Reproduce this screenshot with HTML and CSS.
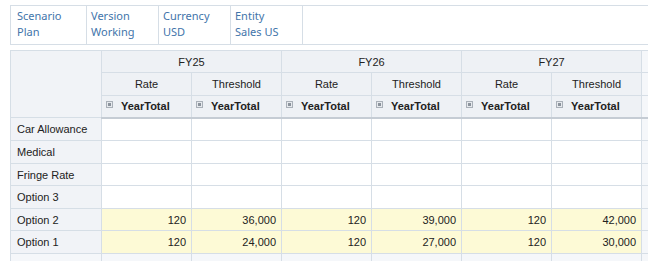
FILE: index.html
```html
<!DOCTYPE html>
<html lang="en">
<head>
  <meta charset="UTF-8" />
  <title>Form Grid</title>
  <link rel="stylesheet" href="styles.css">
</head>
<body>
  <div class="pov">
    <div class="pov-item first">
      <div>Scenario</div>
      <div>Plan</div>
    </div>
    <div class="pov-item">
      <div>Version</div>
      <div>Working</div>
    </div>
    <div class="pov-item">
      <div>Currency</div>
      <div>USD</div>
    </div>
    <div class="pov-item">
      <div>Entity</div>
      <div>Sales US</div>
    </div>
  </div>

  <div class="grid-wrap">
    <table class="grid">
      <colgroup>
        <col class="c-head">
        <col class="c-data"><col class="c-data">
        <col class="c-data"><col class="c-data">
        <col class="c-data"><col class="c-data">
        <col class="c-data">
      </colgroup>
      <thead>
        <tr>
          <th class="corner" rowspan="3"></th>
          <th colspan="2">FY25</th>
          <th colspan="2">FY26</th>
          <th colspan="2">FY27</th>
          <th class="more"></th>
        </tr>
        <tr>
          <th>Rate</th><th>Threshold</th>
          <th>Rate</th><th>Threshold</th>
          <th>Rate</th><th>Threshold</th>
          <th class="more"></th>
        </tr>
        <tr class="period">
          <th><span class="expand"></span>YearTotal</th>
          <th><span class="expand"></span>YearTotal</th>
          <th><span class="expand"></span>YearTotal</th>
          <th><span class="expand"></span>YearTotal</th>
          <th><span class="expand"></span>YearTotal</th>
          <th><span class="expand"></span>YearTotal</th>
          <th class="more"></th>
        </tr>
      </thead>
      <tbody>
        <tr>
          <th class="row-label">Car Allowance</th>
          <td></td><td></td><td></td><td></td><td></td><td></td><td class="more"></td>
        </tr>
        <tr>
          <th class="row-label">Medical</th>
          <td></td><td></td><td></td><td></td><td></td><td></td><td class="more"></td>
        </tr>
        <tr>
          <th class="row-label">Fringe Rate</th>
          <td></td><td></td><td></td><td></td><td></td><td></td><td class="more"></td>
        </tr>
        <tr>
          <th class="row-label">Option 3</th>
          <td></td><td></td><td></td><td></td><td></td><td></td><td class="more"></td>
        </tr>
        <tr class="filled">
          <th class="row-label">Option 2</th>
          <td>120</td><td>36,000</td><td>120</td><td>39,000</td><td>120</td><td>42,000</td><td class="more"></td>
        </tr>
        <tr class="filled">
          <th class="row-label">Option 1</th>
          <td>120</td><td>24,000</td><td>120</td><td>27,000</td><td>120</td><td>30,000</td><td class="more"></td>
        </tr>
        <tr class="blank">
          <th class="row-label"></th>
          <td></td><td></td><td></td><td></td><td></td><td></td><td class="more"></td>
        </tr>
      </tbody>
    </table>
  </div>
</body>
</html>
```

FILE: styles.css
```css
body {
  margin: 0;
  background: #fff;
  font-family: "Liberation Sans", Arial, sans-serif;
  color: #222;
}

/* POV bar */
.pov {
  display: flex;
  margin: 5px 0 0 10px;
  border: 1px solid #d6dee6;
  border-right: none;
  height: 38px;
}

.pov-item {
  width: 72px;
  box-sizing: border-box;
  padding: 2px 0 0 4px;
  border-right: 1px solid #d6dee6;
  font-family: "Noto Sans", "Open Sans", sans-serif;
  font-size: 11px;
  line-height: 16px;
  color: #4274aa;
}

.pov-item.first {
  width: 76px;
  padding-left: 6px;
}

/* grid */
.grid-wrap {
  margin: 5px 0 0 10px;
  height: 211px;
  overflow: hidden;
}

.grid {
  border-collapse: collapse;
  table-layout: fixed;
  width: 721px;
  font-size: 11px;
}

.c-head { width: 91px; }
.c-data { width: 90px; }

.grid th,
.grid td {
  border: 1px solid #d6dee6;
  height: 21.5px;
  padding: 0 5px;
  white-space: nowrap;
  overflow: hidden;
}

.grid thead th {
  background: #eef1f5;
  font-weight: normal;
  text-align: center;
  height: 21.3px;
}

.grid thead .corner {
  background: #f1f3f7;
}

.grid thead .period th {
  font-weight: bold;
  text-align: left;
  padding-left: 4px;
  border-bottom: 2px solid #c5ccd4;
}

.expand {
  display: inline-block;
  width: 5px;
  height: 5px;
  border: 1px solid #a9b0b8;
  background: #e6e9ed;
  margin-right: 8px;
  vertical-align: 2px;
  position: relative;
}

.expand::after {
  content: "";
  position: absolute;
  left: 1px;
  top: 1px;
  width: 3px;
  height: 3px;
  background: #8b939c;
}

.grid .row-label {
  background: #f1f3f7;
  font-weight: normal;
  text-align: left;
  padding-left: 6px;
}

.grid td {
  text-align: right;
  background: #fff;
}

.grid .filled td {
  background: #fdfad6;
}

.grid .more,
.grid .filled .more,
.grid .blank td,
.grid .blank th {
  background: #f5f7fa;
}
```
